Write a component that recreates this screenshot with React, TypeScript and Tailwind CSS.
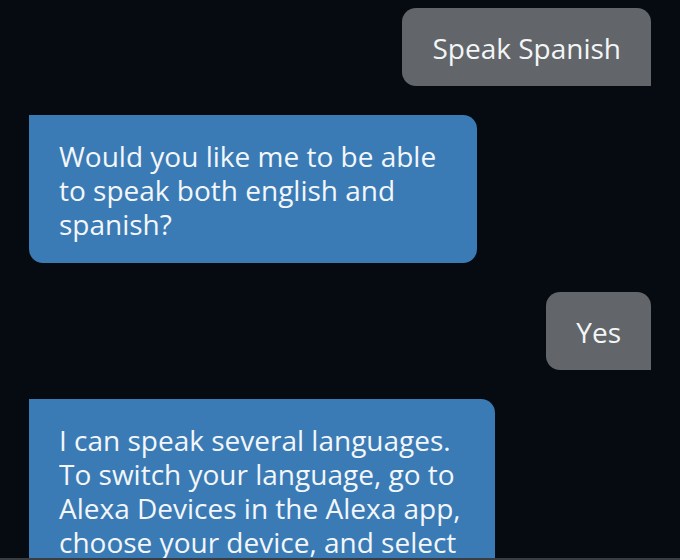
import React from 'react';

type Message = {
  from: 'user' | 'alexa';
  text: string;
  width?: string;
};

const messages: Message[] = [
  { from: 'user', text: 'Speak Spanish' },
  {
    from: 'alexa',
    text: 'Would you like me to be able to speak both english and spanish?',
    width: 'w-[448px]',
  },
  { from: 'user', text: 'Yes' },
  {
    from: 'alexa',
    text: 'I can speak several languages. To switch your language, go to Alexa Devices in the Alexa app, choose your device, and select Language.',
    width: 'w-[466px]',
  },
];

function Bubble({ msg }: { msg: Message }) {
  if (msg.from === 'user') {
    return (
      <div className="self-end rounded-[14px] rounded-br-none bg-[#626569] px-[30px] pt-[23px] pb-[21px] text-[#f3f5f7]">
        {msg.text}
      </div>
    );
  }
  return (
    <div
      className={`self-start shrink-0 rounded-[14px] rounded-tl-none bg-[#3a7bb5] pl-[30px] pr-[20px] pt-[24px] pb-[22px] text-[#f3f6fa] ${msg.width}`}
    >
      {msg.text}
    </div>
  );
}

export default function App() {
  return (
    <div
      className="flex h-[560px] w-[680px] flex-col overflow-hidden bg-[#050b11] text-[28px] leading-[34px]"
      style={{ fontFamily: '"Open Sans", "Noto Sans", sans-serif' }}
    >
      <div className="flex flex-1 flex-col gap-[29px] overflow-hidden px-[29px] pt-[8px]">
        {messages.map((m, i) => (
          <Bubble key={i} msg={m} />
        ))}
      </div>
      <div className="h-[2px] bg-[#3a3e42]" />
    </div>
  );
}
